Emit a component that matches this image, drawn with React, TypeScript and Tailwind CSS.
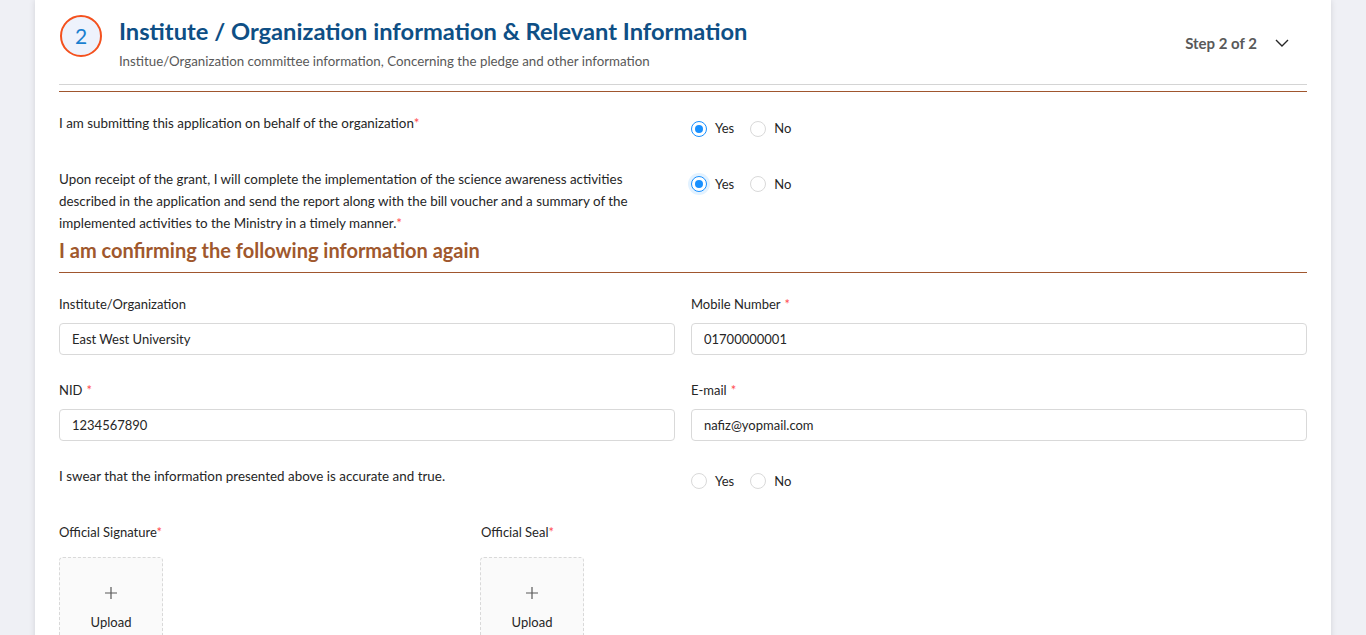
import React, { useState } from "react";

const FONT = "font-['Lato','Open_Sans',sans-serif]";

interface RadioProps {
  value: "yes" | "no" | null;
  onChange: (v: "yes" | "no") => void;
  focused?: boolean;
}

const RadioGroup = ({ value, onChange, focused }: RadioProps) => {
  const dot = (checked: boolean, glow: boolean) => (
    <span
      className={`w-4 h-4 rounded-full border flex items-center justify-center bg-white ${
        checked ? "border-[#1890ff]" : "border-[#d9d9d9]"
      } ${glow ? "shadow-[0_0_0_3px_rgba(24,144,255,0.12)]" : ""}`}
    >
      {checked && <span className="w-2 h-2 rounded-full bg-[#1890ff]" />}
    </span>
  );
  return (
    <div className="flex items-center text-[13px] text-[#262626]">
      <label className="flex items-center cursor-pointer" onClick={() => onChange("yes")}>
        {dot(value === "yes", !!focused)}
        <span className="ml-2">Yes</span>
      </label>
      <label className="flex items-center cursor-pointer ml-4" onClick={() => onChange("no")}>
        {dot(value === "no", false)}
        <span className="ml-2">No</span>
      </label>
    </div>
  );
};

const Req = () => <span className="text-[#ff4d4f]">*</span>;

const Field = ({ label, value, required }: { label: string; value: string; required?: boolean }) => (
  <div>
    <div className="text-[13px] leading-5 text-[#262626]">
      {label}
      {required && <span className="text-[#ff4d4f] ml-1">*</span>}
    </div>
    <input
      defaultValue={value}
      className="mt-[9px] w-full h-8 px-3 border border-[#d9d9d9] rounded-sm text-[13px] text-[#262626] outline-none"
    />
  </div>
);

const UploadBox = () => (
  <div className="w-[104px] h-[104px] mt-[15px] border border-dashed border-[#d9d9d9] bg-[#fafafa] rounded-sm flex flex-col items-center justify-center text-[#262626]">
    <svg className="w-[14px] h-[14px] text-[#595959]" viewBox="0 0 14 14" fill="none" stroke="currentColor" strokeWidth="1.2">
      <path d="M7 1v12M1 7h12" />
    </svg>
    <span className="text-[13px] mt-[13px]">Upload</span>
  </div>
);

export default function App() {
  const [behalf, setBehalf] = useState<"yes" | "no" | null>("yes");
  const [grant, setGrant] = useState<"yes" | "no" | null>("yes");
  const [swear, setSwear] = useState<"yes" | "no" | null>(null);

  return (
    <div className={`${FONT} h-[635px] overflow-hidden bg-[#eff0f5] px-[35px]`}>
      <div className="bg-white min-h-full px-6 shadow-[0_0_6px_rgba(0,0,0,0.12)]">
        {/* Header */}
        <div className="flex items-start pt-[15px]">
          <div className="w-[42px] h-[42px] ml-px rounded-full border-2 border-[#f4511e] bg-[#eef2fc] flex items-center justify-center text-[21px] text-[#1a7fd0]">
            2
          </div>
          <div className="ml-[17px] flex-1">
            <h1 className="text-[23.7px] leading-8 font-bold text-[#0e4f85]">
              Institute / Organization information &amp; Relevant Information
            </h1>
            <p className="text-[13.3px] leading-5 text-[#595959] mt-[4px]">
              Institue/Organization committee information, Concerning the pledge and other information
            </p>
          </div>
          <div className="flex items-center mt-[17px] mr-[17px]">
            <span className="text-[15px] font-bold text-[#595959]">Step 2 of 2</span>
            <svg className="ml-[17px] w-4 h-4 text-[#262626]" viewBox="0 0 16 16" fill="none" stroke="currentColor" strokeWidth="1.4">
              <path d="M2 5l6 6 6-6" />
            </svg>
          </div>
        </div>

        <div className="mt-[13px] h-px bg-[#d4d4d4]" />
        <div className="mt-[6px] h-px bg-[#a0562e]" />

        {/* Pledges */}
        <div className="grid grid-cols-2 gap-x-4 mt-5">
          <div className="text-[13.4px] leading-[22px] text-[#262626]">
            I am submitting this application on behalf of the organization
            <Req />
          </div>
          <div className="pt-[7px]">
            <RadioGroup value={behalf} onChange={setBehalf} />
          </div>
        </div>

        <div className="grid grid-cols-2 gap-x-4 mt-[29px]">
          <div className="text-[13.4px] leading-[22px] text-[#262626] pr-10">
            Upon receipt of the grant, I will complete the implementation of the science awareness activities described in the
            application and send the report along with the bill voucher and a summary of the implemented activities to the
            Ministry in a timely manner.
            <Req />
          </div>
          <div className="pt-[7px]">
            <RadioGroup value={grant} onChange={setGrant} focused />
          </div>
        </div>

        <h2 className="text-[20px] leading-[26px] font-bold text-[#a0582d] mt-[3px]">
          I am confirming the following information again
        </h2>
        <div className="mt-[9px] h-px bg-[#a0562e]" />

        {/* Contact fields */}
        <div className="grid grid-cols-2 gap-x-4 gap-y-[25px] mt-[21px]">
          <Field label="Institute/Organization" value="East West University" />
          <Field label="Mobile Number" value="01700000001" required />
          <Field label="NID" value="1234567890" required />
          <Field label="E-mail" value="nafiz@yopmail.com" required />
        </div>

        <div className="grid grid-cols-2 gap-x-4 mt-[24px]">
          <div className="text-[13.4px] leading-[22px] text-[#262626]">
            I swear that the information presented above is accurate and true.
          </div>
          <div className="pt-[7px]">
            <RadioGroup value={swear} onChange={setSwear} />
          </div>
        </div>

        {/* Uploads */}
        <div className="flex mt-[31px]">
          <div className="w-[421px]">
            <div className="text-[13px] leading-5 text-[#262626]">
              Official Signature
              <Req />
            </div>
            <UploadBox />
          </div>
          <div>
            <div className="text-[13px] leading-5 text-[#262626] ml-px">
              Official Seal
              <Req />
            </div>
            <UploadBox />
          </div>
        </div>
      </div>
    </div>
  );
}
